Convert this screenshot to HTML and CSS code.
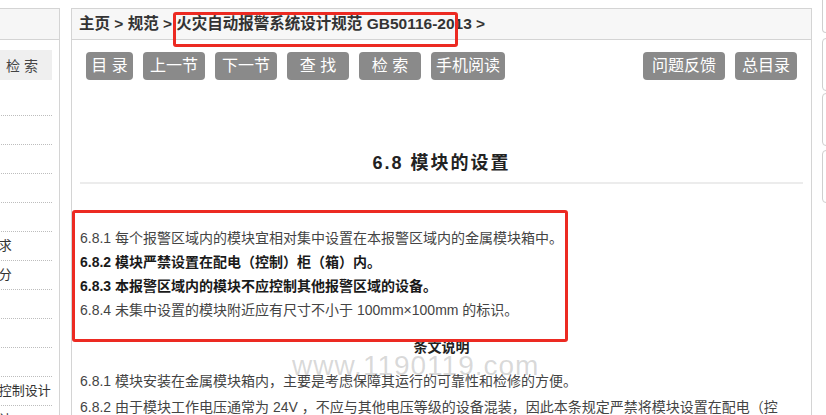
FILE: index.html
```html
<!DOCTYPE html>
<html lang="zh-CN">
<head>
<meta charset="utf-8">
<title>6.8 模块的设置</title>
<link rel="stylesheet" href="styles.css">
</head>
<body>
<div class="page">
  <aside class="side">
    <div class="side-head"></div>
    <div class="side-inner">
      <div class="side-search">
        <span class="side-input"></span>
        <button class="side-btn">检 索</button>
      </div>
      <ul class="toc">
        <li>前言</li>
        <li>1 总则</li>
        <li>2 术语</li>
        <li>3 基本规定</li>
        <li>3.1 一般规定</li>
        <li>3.2 系统形式的选择和设计要求</li>
        <li>3.3 报警区域和探测区域的划分</li>
        <li>3.4 消防控制室</li>
        <li>4 消防联动控制设计</li>
        <li>4.1 一般规定</li>
        <li>4.2 自动喷水灭火系统的联动控制设计</li>
        <li>4.3 消火栓系统的联动控制设计</li>
      </ul>
    </div>
  </aside>

  <main class="main">
    <div class="crumb">主页 &gt; 规范 &gt; 火灾自动报警系统设计规范 GB50116-2013 &gt;</div>
    <div class="toolbar">
      <div class="tb-group">
        <a class="btn btn-s">目 录</a>
        <a class="btn btn-m">上一节</a>
        <a class="btn btn-m">下一节</a>
        <a class="btn btn-m">查 找</a>
        <a class="btn btn-m">检 索</a>
        <a class="btn btn-l">手机阅读</a>
      </div>
      <div class="tb-group">
        <a class="btn btn-xl">问题反馈</a>
        <a class="btn btn-m">总目录</a>
      </div>
    </div>

    <h1 class="title">6.8 模块的设置</h1>

    <div class="clauses">
      <p>6.8.1 每个报警区域内的模块宜相对集中设置在本报警区域内的金属模块箱中。</p>
      <p class="strong">6.8.2 模块严禁设置在配电（控制）柜（箱）内。</p>
      <p class="strong">6.8.3 本报警区域内的模块不应控制其他报警区域的设备。</p>
      <p>6.8.4 未集中设置的模块附近应有尺寸不小于 100mm×100mm 的标识。</p>
    </div>

    <h2 class="explain-title">条文说明</h2>
    <div class="explain">
      <p>6.8.1 模块安装在金属模块箱内，主要是考虑保障其运行的可靠性和检修的方便。</p>
      <p>6.8.2 由于模块工作电压通常为 24V ，不应与其他电压等级的设备混装，因此本条规定严禁将模块设置在配电（控制）柜（箱）内。</p>
    </div>
  </main>

  <aside class="rail">
    <div class="rail-box rail-first"></div>
    <div class="rail-box rail-b2"></div>
    <div class="rail-box rail-b3"></div>
    <div class="rail-box rail-b4"></div>
  </aside>
</div>

<div class="mark mark-crumb"></div>
<div class="mark mark-clauses"></div>
<div class="watermark">www.1190119.com</div>
</body>
</html>
```

FILE: styles.css
```css
html, body {
  margin: 0;
  padding: 0;
  height: 100%;
  overflow: hidden;
  background: #fff;
}

body {
  font-family: "Liberation Sans", "Noto Sans CJK SC", sans-serif;
  color: #333;
  position: relative;
}

.page {
  display: flex;
  align-items: flex-start;
}

/* ---------- left sidebar ---------- */
.side {
  width: 60px;
  flex: none;
  box-sizing: border-box;
  margin-top: 8px;
  border-top: 1px solid #d4d4d4;
  border-right: 1px solid #d4d4d4;
  height: 420px;
  overflow: hidden;
}

.side-head {
  height: 30px;
  background: #f6f6f6;
  border-bottom: 1px solid #d4d4d4;
}

.side-inner {
  margin-left: -166px;
  width: 218px;
}

.side-search {
  display: flex;
  margin-top: 10px;
  height: 30px;
}

.side-input {
  flex: 1;
}

.side-btn {
  width: 60px;
  height: 30px;
  border: none;
  background: #efefef;
  color: #444;
  font-family: "Liberation Sans", "Noto Sans CJK SC", sans-serif;
  font-size: 14px;
  padding: 0;
}

.toc {
  list-style: none;
  margin: 7px 0 0;
  padding: 0;
}

.toc li {
  height: 28px;
  line-height: 28px;
  font-size: 13px;
  white-space: nowrap;
  overflow: hidden;
  border-bottom: 1px dotted #bdbdbd;
  color: #333;
}

/* ---------- main panel ---------- */
.main {
  width: 741px;
  flex: none;
  box-sizing: border-box;
  margin-top: 8px;
  margin-left: 11px;
  min-height: 500px;
  border: 1px solid #d4d4d4;
  border-bottom: none;
}

.crumb {
  height: 30px;
  line-height: 30px;
  background: #f7f7f7;
  border-bottom: 1px solid #d4d4d4;
  padding-left: 7px;
  font-size: 15.5px;
  font-weight: bold;
  color: #333;
  white-space: nowrap;
}

.toolbar {
  display: flex;
  justify-content: space-between;
  margin-top: 12px;
  padding: 0 14px;
}

.tb-group {
  display: flex;
  gap: 10px;
}

.btn {
  display: block;
  height: 28px;
  line-height: 28px;
  text-align: center;
  background: #8a8a8a;
  color: #fff;
  border-radius: 4px;
  font-size: 16px;
  white-space: nowrap;
}

.btn-s { width: 47px; }
.btn-m { width: 62px; }
.btn-l { width: 74px; }
.btn-xl { width: 82px; }

.title {
  margin: 70px 8px 0;
  height: 26px;
  line-height: 26px;
  padding-bottom: 6px;
  border-bottom: 2px solid #ececec;
  text-align: center;
  font-size: 18px;
  font-weight: bold;
  letter-spacing: 2px;
  color: #222;
}

.clauses {
  margin-top: 42px;
  padding: 0 8px;
}

.clauses p {
  margin: 0;
  font-size: 14px;
  line-height: 24px;
  color: #444;
}

.clauses p.strong {
  font-weight: bold;
  color: #1a1a1a;
}

.explain-title {
  margin: 13px 8px 0;
  line-height: 24px;
  font-size: 14px;
  font-weight: bold;
  text-align: center;
  color: #222;
}

.explain {
  margin-top: 9px;
  padding: 0 24px 0 8px;
}

.explain p {
  margin: 0;
  font-size: 14px;
  line-height: 26px;
  color: #444;
}

/* ---------- right rail ---------- */
.rail {
  flex: 1;
  margin-left: 10px;
  min-width: 0;
}

.rail-box {
  border: 1px solid #cfcfcf;
  border-radius: 4px;
  width: 40px;
  box-sizing: border-box;
}

.rail-first {
  height: 33px;
  border-top: none;
  border-radius: 0 0 4px 4px;
}

.rail-b2 { margin-top: 5px; height: 53px; }
.rail-b3 { margin-top: 2px; height: 53px; }
.rail-b4 { margin-top: 4px; height: 53px; }

/* ---------- overlays ---------- */
.mark {
  position: absolute;
  box-sizing: border-box;
  border: 3px solid #ec2a22;
  border-radius: 3px;
}

.mark-crumb {
  left: 173px;
  top: 12px;
  width: 285px;
  height: 35px;
}

.mark-clauses {
  left: 72px;
  top: 210px;
  width: 496px;
  height: 132px;
}

.watermark {
  position: absolute;
  left: 292px;
  top: 350px;
  font-family: "Liberation Sans", sans-serif;
  font-size: 28px;
  letter-spacing: 1px;
  color: rgba(120, 120, 120, 0.28);
  white-space: nowrap;
}
```
